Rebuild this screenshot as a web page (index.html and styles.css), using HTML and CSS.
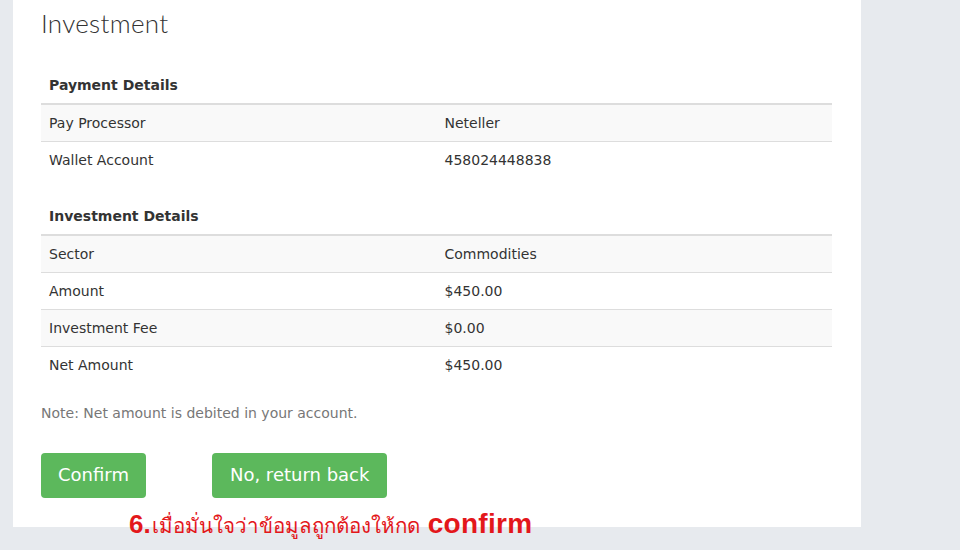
FILE: index.html
```html
<!DOCTYPE html>
<html lang="en">
<head>
  <meta charset="UTF-8">
  <title>Investment</title>
  <link rel="stylesheet" href="styles.css">
</head>
<body>
  <div class="panel">
    <h2 class="page-title">Investment</h2>

    <table class="table">
      <thead>
        <tr><th colspan="2">Payment Details</th></tr>
      </thead>
      <tbody>
        <tr><td>Pay Processor</td><td>Neteller</td></tr>
        <tr><td>Wallet Account</td><td>458024448838</td></tr>
      </tbody>
    </table>

    <table class="table">
      <thead>
        <tr><th colspan="2">Investment Details</th></tr>
      </thead>
      <tbody>
        <tr><td>Sector</td><td>Commodities</td></tr>
        <tr><td>Amount</td><td>$450.00</td></tr>
        <tr><td>Investment Fee</td><td>$0.00</td></tr>
        <tr><td>Net Amount</td><td>$450.00</td></tr>
      </tbody>
    </table>

    <p class="note">Note: Net amount is debited in your account.</p>

    <div class="actions">
      <button class="btn">Confirm</button>
      <button class="btn">No, return back</button>
    </div>
  </div>

  <!-- annotation over the screenshot -->
  <div class="hint"><b class="step">6.</b><span class="thai">เมื่อมั่นใจว่าข้อมูลถูกต้องให้กด</span><b class="word">confirm</b></div>
</body>
</html>
```

FILE: styles.css
```css
html,
body {
  height: 100%;
}

body {
  margin: 0;
  background-color: #e7eaee;
  font-family: "DejaVu Sans", Verdana, sans-serif;
  font-size: 14px;
  line-height: 20px;
  color: #333;
}

.panel {
  width: 791px;
  margin-left: 13px;
  padding: 0 29px 29px 28px;
  background-color: #fff;
}

.page-title {
  margin: 0;
  padding-top: 7px;
  font-family: Lato, sans-serif;
  font-weight: 300;
  font-size: 26px;
  line-height: 32px;
  color: #333;
  letter-spacing: 0.3px;
}

.table {
  width: 100%;
  border-collapse: collapse;
  margin-bottom: 20px;
  table-layout: fixed;
}

.panel .table:first-of-type {
  margin-top: 28px;
}

.table th {
  text-align: left;
  padding: 8px;
  border-bottom: 2px solid #ddd;
  font-weight: bold;
}

.table td {
  padding: 8px;
  border-top: 1px solid #ddd;
}

.table tbody tr:first-child td {
  border-top: none;
}

.table tbody tr:nth-child(odd) {
  background-color: #f9f9f9;
}

.note {
  margin: 0;
  color: #777;
}

.actions {
  display: flex;
  gap: 66px;
  margin-top: 30px;
}

.btn {
  font-family: "DejaVu Sans", Verdana, sans-serif;
  font-size: 18px;
  line-height: 24px;
  padding: 10px 17px 11px;
  color: #fff;
  background-color: #5cb85c;
  border: none;
  border-radius: 4px;
  cursor: pointer;
}

.btn + .btn {
  padding: 10px 18px 11px;
}

.hint {
  position: absolute;
  left: 129px;
  top: 510px;
  display: flex;
  align-items: baseline;
  color: #e3171b;
  font-family: "Liberation Sans", "Noto Sans", sans-serif;
  line-height: 1;
  white-space: nowrap;
}

.hint .step {
  font-size: 26px;
}

.hint .thai {
  font-size: 20.5px;
  margin-left: 1px;
  margin-right: 8px;
}

.hint .word {
  font-size: 28px;
  letter-spacing: 0.3px;
}
```
